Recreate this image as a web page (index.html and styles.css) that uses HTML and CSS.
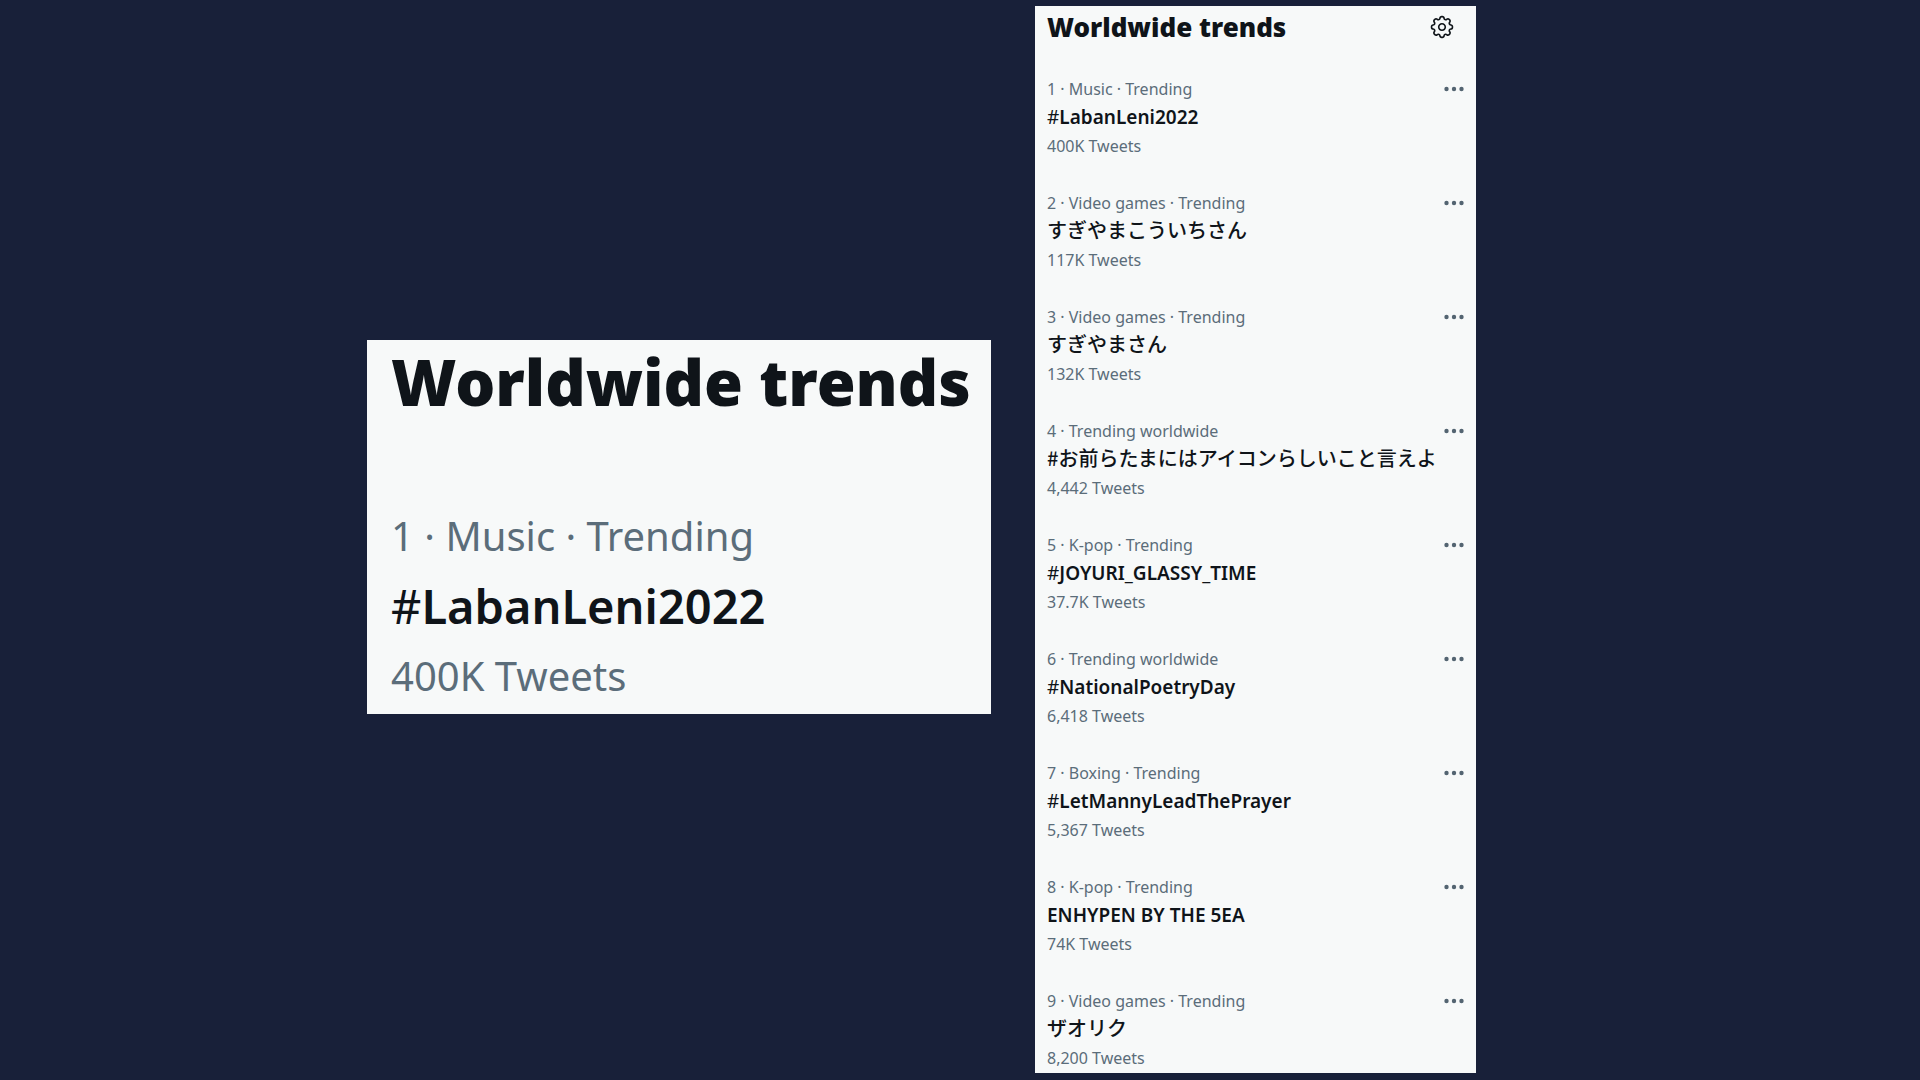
FILE: index.html
```html
<!DOCTYPE html>
<html lang="en">
<head>
  <meta charset="UTF-8">
  <title>Worldwide trends</title>
  <link rel="stylesheet" href="styles.css">
</head>
<body>
  <!-- shared icons -->
  <svg class="sprite" aria-hidden="true">
    <symbol id="dots" viewBox="0 0 20 6">
      <circle cx="2.5" cy="3" r="2.2"/>
      <circle cx="10" cy="3" r="2.2"/>
      <circle cx="17.5" cy="3" r="2.2"/>
    </symbol>
    <symbol id="gear" viewBox="0 0 24 24">
      <path d="M12 8.21c-2.09 0-3.79 1.7-3.79 3.79s1.7 3.79 3.79 3.79 3.79-1.7 3.79-3.79-1.7-3.79-3.79-3.79zm0 6.08c-1.262 0-2.29-1.026-2.29-2.29S10.74 9.71 12 9.71s2.29 1.026 2.29 2.29-1.028 2.29-2.29 2.29z"/>
      <path d="M12.36 22.375h-.722c-1.183 0-2.154-.888-2.262-2.064l-.014-.147c-.025-.287-.207-.533-.472-.644-.286-.12-.582-.065-.798.115l-.116.097c-.868.725-2.253.663-3.06-.14l-.51-.51c-.836-.84-.896-2.154-.14-3.06l.098-.118c.186-.222.23-.523.122-.787-.11-.272-.358-.454-.646-.48l-.15-.014c-1.18-.107-2.067-1.08-2.067-2.262v-.722c0-1.183.888-2.154 2.064-2.262l.156-.014c.285-.025.53-.207.642-.473.11-.27.065-.573-.12-.795l-.094-.116c-.757-.908-.698-2.223.137-3.06l.512-.512c.804-.804 2.188-.865 3.06-.14l.116.098c.218.184.528.23.79.122.27-.112.452-.358.477-.643l.014-.153c.107-1.18 1.08-2.066 2.262-2.066h.722c1.183 0 2.154.888 2.262 2.064l.014.156c.025.285.206.53.472.64.277.117.58.062.794-.117l.12-.102c.867-.723 2.254-.662 3.06.14l.51.512c.836.838.896 2.153.14 3.06l-.1.118c-.188.22-.234.522-.123.788.112.27.36.45.646.478l.152.014c1.18.107 2.067 1.08 2.067 2.262v.723c0 1.183-.888 2.154-2.064 2.262l-.155.014c-.284.024-.53.205-.64.47-.113.272-.067.574.117.795l.1.12c.756.905.696 2.22-.14 3.06l-.51.51c-.807.804-2.19.864-3.06.14l-.115-.096c-.217-.183-.53-.23-.79-.122-.273.114-.455.36-.48.646l-.014.15c-.107 1.173-1.08 2.06-2.262 2.06zm-3.773-4.42c.3 0 .593.06.87.175.79.328 1.324 1.054 1.4 1.896l.014.147c.037.4.367.7.77.7h.722c.4 0 .73-.3.768-.7l.014-.148c.076-.842.61-1.567 1.392-1.892.793-.33 1.696-.182 2.333.35l.113.094c.178.148.366.18.493.18.206 0 .4-.08.546-.227l.51-.51c.284-.284.305-.73.048-1.038l-.1-.12c-.542-.65-.677-1.54-.352-2.323.326-.79 1.052-1.32 1.894-1.397l.155-.014c.397-.037.7-.367.7-.77v-.722c0-.4-.303-.73-.702-.768l-.152-.014c-.846-.078-1.57-.61-1.895-1.393-.326-.788-.19-1.678.353-2.327l.1-.118c.257-.31.236-.756-.048-1.04l-.51-.51c-.146-.147-.34-.227-.546-.227-.127 0-.315.032-.492.18l-.12.1c-.634.528-1.55.67-2.322.354-.788-.327-1.32-1.052-1.397-1.896l-.014-.155c-.035-.397-.365-.7-.767-.7h-.723c-.4 0-.73.303-.768.702l-.014.152c-.076.843-.608 1.568-1.39 1.893-.787.326-1.693.183-2.33-.35l-.118-.096c-.18-.15-.368-.18-.495-.18-.206 0-.4.08-.546.226l-.512.51c-.282.284-.303.73-.046 1.038l.1.118c.54.653.677 1.544.352 2.325-.327.788-1.052 1.32-1.895 1.397l-.156.014c-.397.037-.7.367-.7.77v.722c0 .4.303.73.702.768l.15.014c.848.078 1.573.612 1.897 1.396.325.786.19 1.675-.353 2.325l-.096.115c-.26.31-.238.756.046 1.04l.51.51c.146.147.34.227.546.227.127 0 .315-.03.492-.18l.116-.096c.406-.336.923-.524 1.453-.524z"/>
    </symbol>
  </svg>

  <main class="container">
    <section class="panel preview">
      <h2>Worldwide trends</h2>
      <div class="trend">
        <p class="meta">1 · Music · Trending</p>
        <h3><span class="hash">#</span>LabanLeni2022</h3>
        <p class="count">400K Tweets</p>
      </div>
    </section>

    <section class="panel trends">
      <header>
        <h1>Worldwide trends</h1>
        <button class="settings" aria-label="Settings"><svg><use href="#gear"/></svg></button>
      </header>

      <article class="trend">
        <p class="meta">1 · Music · Trending</p>
        <h3><span class="hash">#</span>LabanLeni2022</h3>
        <p class="count">400K Tweets</p>
        <button class="more" aria-label="More"><svg><use href="#dots"/></svg></button>
      </article>
      <article class="trend">
        <p class="meta">2 · Video games · Trending</p>
        <h3 lang="ja">すぎやまこういちさん</h3>
        <p class="count">117K Tweets</p>
        <button class="more" aria-label="More"><svg><use href="#dots"/></svg></button>
      </article>
      <article class="trend">
        <p class="meta">3 · Video games · Trending</p>
        <h3 lang="ja">すぎやまさん</h3>
        <p class="count">132K Tweets</p>
        <button class="more" aria-label="More"><svg><use href="#dots"/></svg></button>
      </article>
      <article class="trend">
        <p class="meta">4 · Trending worldwide</p>
        <h3 lang="ja">#お前らたまにはアイコンらしいこと言えよ</h3>
        <p class="count">4,442 Tweets</p>
        <button class="more" aria-label="More"><svg><use href="#dots"/></svg></button>
      </article>
      <article class="trend">
        <p class="meta">5 · K-pop · Trending</p>
        <h3><span class="hash">#</span>JOYURI_GLASSY_TIME</h3>
        <p class="count">37.7K Tweets</p>
        <button class="more" aria-label="More"><svg><use href="#dots"/></svg></button>
      </article>
      <article class="trend">
        <p class="meta">6 · Trending worldwide</p>
        <h3><span class="hash">#</span>NationalPoetryDay</h3>
        <p class="count">6,418 Tweets</p>
        <button class="more" aria-label="More"><svg><use href="#dots"/></svg></button>
      </article>
      <article class="trend">
        <p class="meta">7 · Boxing · Trending</p>
        <h3><span class="hash">#</span>LetMannyLeadThePrayer</h3>
        <p class="count">5,367 Tweets</p>
        <button class="more" aria-label="More"><svg><use href="#dots"/></svg></button>
      </article>
      <article class="trend">
        <p class="meta">8 · K-pop · Trending</p>
        <h3>ENHYPEN BY THE 5EA</h3>
        <p class="count">74K Tweets</p>
        <button class="more" aria-label="More"><svg><use href="#dots"/></svg></button>
      </article>
      <article class="trend">
        <p class="meta">9 · Video games · Trending</p>
        <h3 lang="ja">ザオリク</h3>
        <p class="count">8,200 Tweets</p>
        <button class="more" aria-label="More"><svg><use href="#dots"/></svg></button>
      </article>
    </section>
  </main>
</body>
</html>
```
FILE: styles.css
```css
* {
  box-sizing: border-box;
}

body {
  margin: 0;
  background: #182039;
  color: #0f1419;
  font-family: "Noto Sans", "Noto Sans CJK JP", sans-serif;
}

h1, h2, h3, p {
  margin: 0;
  white-space: nowrap;
}

.sprite {
  display: none;
}

/* outer columns are the empty margins of the page */
.container {
  display: grid;
  grid-template-columns:
    minmax(0, 367fr) minmax(0, 624fr) minmax(0, 44fr) minmax(0, 441fr) minmax(0, 444fr);
  align-items: center;
  min-height: 100vh;
  padding: 6px 0 7px;
}

.panel {
  background: #f7f9f9;
}

.preview {
  grid-column: 2;
  padding: 6px 24px 4px;
  margin-bottom: 26px;
}

.trends {
  grid-column: 4;
  padding: 0 12px 3px;
}

header {
  display: flex;
  justify-content: space-between;
  align-items: center;
  height: 42px;
  padding-right: 9px;
}

h1 {
  font-size: 26px;
  font-weight: 900;
}

h3 {
  font-size: 19px;
  font-weight: 600;
  line-height: 33px;
}

h3:lang(ja) {
  padding-bottom: 4px;
  font-family: "Noto Sans CJK JP", sans-serif;
  font-size: 20px;
  font-weight: 500;
  line-height: 29px;
}

.hash {
  font-weight: 400;
}

.meta, .count {
  color: #5b6d7a;
  font-size: 16px;
  line-height: 24px;
}

.trends .trend {
  display: grid;
  grid-template-columns: 1fr auto;
  margin-top: 33px;
}

.trends header + .trend {
  margin-top: 29px;
}

.trends h3, .trends .count {
  grid-column: 1 / 3;
}

.more {
  grid-row: 1;
  grid-column: 2;
}

button {
  display: flex;
  align-items: center;
  padding: 0;
  border: none;
  background: none;
  color: #536471;
  cursor: pointer;
}

svg {
  fill: currentColor;
}

.more svg {
  width: 20px;
  height: 6px;
}

.settings {
  color: #0f1419;
}

.settings svg {
  width: 26px;
  height: 26px;
}

/* enlarged copy of the first trend */
.preview h2 {
  font-size: 63px;
  font-weight: 900;
  line-height: 72px;
}

.preview .trend {
  margin-top: 84px;
}

.preview h3 {
  font-size: 47px;
  line-height: 72px;
}

.preview .meta, .preview .count {
  font-size: 40px;
  line-height: 68px;
}
```
